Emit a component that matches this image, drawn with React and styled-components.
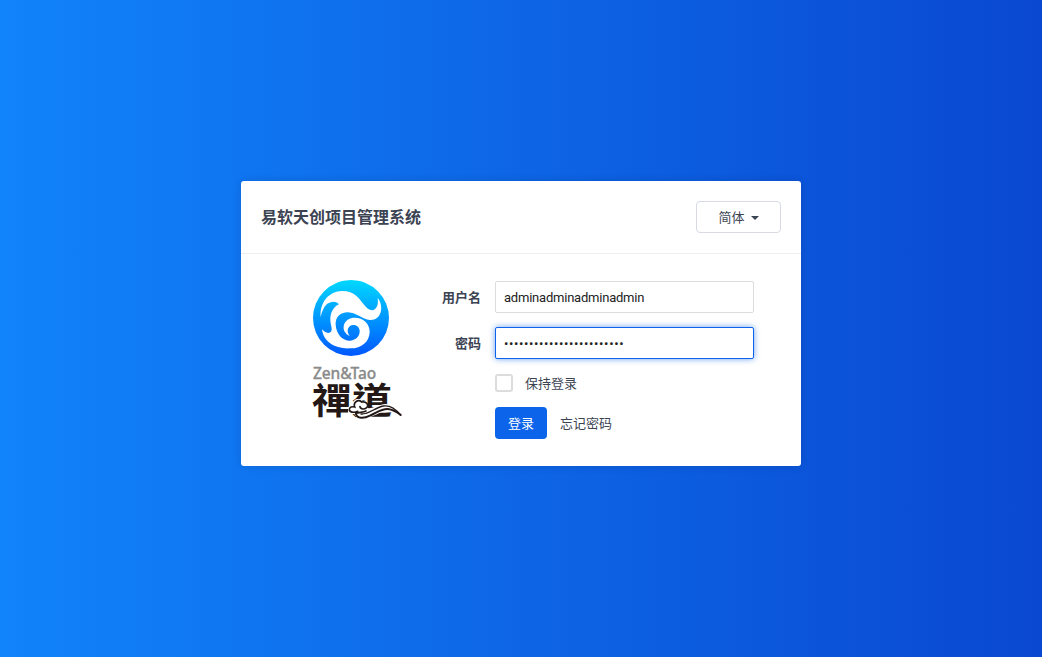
import React from "react";
import styled, { createGlobalStyle } from "styled-components";

const GlobalStyle = createGlobalStyle`
  *, *::before, *::after { box-sizing: border-box; }
  html, body, #root { height: 100%; margin: 0; }
  body {
    overflow: hidden;
    font: 13px/20px "Noto Sans CJK SC", sans-serif;
    color: #3c4353;
  }
`;

const Page = styled.main`
  height: 100%;
  padding-top: 181px;
  background: linear-gradient(to right, #1183fb 0%, #0a48d1 100%);
`;

const Card = styled.section`
  width: 560px;
  height: 285px;
  margin: 0 auto;
  background: #fff;
  border-radius: 3px;
  box-shadow: 0 0 10px rgba(0, 0, 0, 0.12);
`;

const Header = styled.header`
  display: flex;
  align-items: center;
  justify-content: space-between;
  height: 73px;
  padding: 0 20px;
  border-bottom: 1px solid #eee;
`;

const Title = styled.h1`
  margin: 0 0 3px;
  font-size: 16px;
  line-height: 24px;
  font-weight: 700;
  white-space: nowrap;
`;

const LanguageButton = styled.button`
  display: flex;
  align-items: center;
  justify-content: center;
  gap: 6px;
  width: 85px;
  height: 32px;
  padding: 0;
  border: 1px solid #d8dbe5;
  border-radius: 4px;
  background: #fff;
  color: inherit;
  font: inherit;
`;

const Caret = styled.span`
  border: 4px solid transparent;
  border-top-color: #3c4353;
  border-bottom: 0;
  transform: translateY(1px);
`;

const Body = styled.div`
  display: flex;
`;

const Brand = styled.div`
  width: 184px;
  padding: 26px 0 0 72px;
`;

const Emblem = styled.svg`
  display: block;
  width: 76px;
  height: 76px;
`;

const BrandName = styled.div`
  margin-top: 8px;
  color: #8b8b8b;
  font: 500 15.5px/18px "Noto Sans", sans-serif;
  -webkit-text-stroke: 0.3px #8b8b8b;
  letter-spacing: -0.1px;
  white-space: nowrap;
`;

const Wordmark = styled.div`
  position: relative;
  width: 90px;
  height: 38px;
  color: #231815;
  font: 700 40px/34px "Noto Sans CJK TC", sans-serif;
  white-space: nowrap;
`;

const Lettering = styled.span`
  display: block;
  margin-left: -1px;
  transform: scaleY(0.9);
  transform-origin: 0 50%;
`;

const Cloud = styled.svg`
  position: absolute;
  left: 35px;
  top: 17px;
  width: 54px;
  height: 20px;
`;

const Form = styled.form`
  display: grid;
  grid-template-columns: 56px 259px;
  grid-template-rows: 32px 32px 20px 32px;
  column-gap: 14px;
  row-gap: 14px;
  align-items: center;
  padding-top: 27px;
`;

const Label = styled.label`
  font-weight: 700;
  text-align: right;
  padding-bottom: 1px;
`;

const Input = styled.input`
  width: 259px;
  height: 32px;
  padding: 0 8px;
  border: 1px solid ${(p) => (p.$active ? "#0c64eb" : "#dcdcdc")};
  border-radius: 2px;
  outline: 0;
  background: #fff;
  box-shadow: ${(p) => (p.$active ? "0 0 6px rgba(12, 100, 235, 0.6)" : "none")};
  color: #222;
  font: 13px/20px Roboto, sans-serif;
  letter-spacing: ${(p) => p.$spacing};
`;

const Remember = styled.label`
  grid-column: 2;
  display: flex;
  align-items: center;
  gap: 12px;
  height: 20px;
`;

const Checkbox = styled.input`
  appearance: none;
  width: 18px;
  height: 18px;
  margin: 0;
  border: 2px solid #dcdcdc;
  border-radius: 3px;
  background: #fff;
`;

const Actions = styled.div`
  grid-column: 2;
  display: flex;
  align-items: center;
  gap: 13px;
`;

const Submit = styled.button`
  width: 52px;
  height: 32px;
  padding: 0;
  border: 0;
  border-radius: 4px;
  background: #0c64eb;
  color: #fff;
  font: inherit;
`;

const TextLink = styled.a`
  color: inherit;
  text-decoration: none;
`;

export default function App() {
  return (
    <>
      <GlobalStyle />
      <Page>
        <Card>
          <Header>
            <Title>易软天创项目管理系统</Title>
            <LanguageButton type="button">
              简体
              <Caret />
            </LanguageButton>
          </Header>
          <Body>
            <Brand>
              <Emblem viewBox="39 30 228 228" aria-hidden="true">
                <defs>
                  <linearGradient id="sky" x1="0" y1="0" x2="0" y2="1">
                    <stop offset="0" stopColor="#00d8ff" />
                    <stop offset="1" stopColor="#0057ff" />
                  </linearGradient>
                </defs>
                <circle cx="153" cy="144" r="114" fill="url(#sky)" />
                <path
                  fill="#fff"
                  d="M62 141C59 96 87 64 126 63C158 62 174 80 191 103C202 118 214 124 222 119C233 113 235 101 233 84C243 96 246 113 242 127C237 144 224 151 210 150C186 148 171 128 144 127C119 127 106 142 107 164C109 193 128 212 149 212C166 212 179 200 179 184C179 172 170 164 159 165C145 166 137 181 149 198C134 191 128 177 132 164C137 150 149 143 164 143C190 143 209 161 209 185C209 216 183 236 150 235C105 237 70 216 66 178C75 188 84 191 91 187C100 180 92 168 91 151C90 129 100 110 117 103C110 92 92 93 80 103C70 112 66 125 62 141Z"
                />
              </Emblem>
              <BrandName>Zen&amp;Tao</BrandName>
              <Wordmark>
                <Lettering>禪道</Lettering>
                <Cloud viewBox="0 0 162 60" aria-hidden="true">
                  <path
                    fill="#fff"
                    stroke="#fff"
                    strokeWidth="9"
                    d="M4 38C0 28 8 22 16 24C16 5 31 -1 41 9C53 7 58 20 52 29C66 39 81 27 98 22C124 14 145 29 158 45C137 33 118 26 99 35C78 45 57 57 36 52C20 50 22 40 28 38C19 41 10 42 4 38Z"
                  />
                  <path
                    fill="none"
                    stroke="#231815"
                    strokeWidth="5"
                    strokeLinecap="round"
                    d="M29 37C18 42 3 40 4 31C5 24 12 22 20 24C15 9 30 0 41 9C53 6 63 16 57 25C51 33 37 31 36 23M24 43C33 39 45 41 54 36"
                  />
                  <path
                    fill="none"
                    stroke="#231815"
                    strokeWidth="6"
                    strokeLinecap="round"
                    d="M24 45C27 59 47 59 66 50C88 40 100 29 120 30C138 32 149 41 158 48"
                  />
                  <path
                    fill="none"
                    stroke="#231815"
                    strokeWidth="4"
                    strokeLinecap="round"
                    d="M39 45C63 47 79 26 106 21C126 18 144 31 158 48"
                  />
                </Cloud>
              </Wordmark>
            </Brand>
            <Form onSubmit={(e) => e.preventDefault()}>
              <Label htmlFor="account">用户名</Label>
              <Input id="account" defaultValue="adminadminadminadmin" $spacing="-0.22px" />
              <Label htmlFor="password">密码</Label>
              <Input
                id="password"
                type="password"
                defaultValue="adminadminadminadmin1234"
                $active
                $spacing="0.62px"
              />
              <Remember>
                <Checkbox type="checkbox" />
                保持登录
              </Remember>
              <Actions>
                <Submit type="submit">登录</Submit>
                <TextLink>忘记密码</TextLink>
              </Actions>
            </Form>
          </Body>
        </Card>
      </Page>
    </>
  );
}
